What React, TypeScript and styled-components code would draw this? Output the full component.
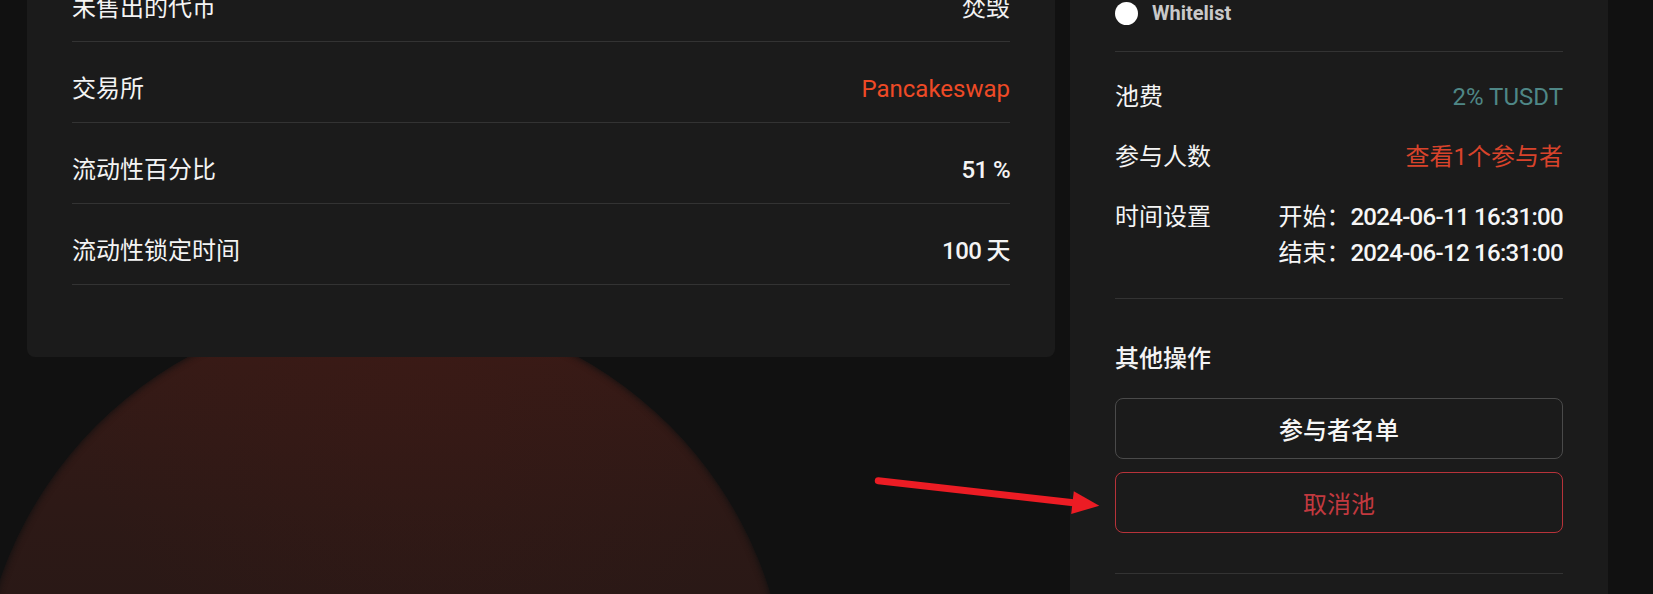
import React from "react";
import styled, { createGlobalStyle } from "styled-components";

const GlobalStyle = createGlobalStyle`
  html, body {
    margin: 0;
    padding: 0;
    background: #111111;
  }
  body {
    font-family: Roboto, "Noto Sans CJK SC", sans-serif;
    color: #f2f2f2;
    overflow: hidden;
  }
  * { box-sizing: border-box; }
`;

const Page = styled.div`
  position: relative;
  width: 1653px;
  height: 594px;
  overflow: hidden;
  background: #111111;
`;

const Glow = styled.div`
  position: absolute;
  z-index: 0;
  left: -22px;
  top: 307px;
  width: 810px;
  height: 810px;
  border-radius: 50%;
  background:
    radial-gradient(circle at 55% 8%, rgba(70, 26, 21, 0.25) 0%, rgba(70, 26, 21, 0) 40%),
    linear-gradient(
      180deg,
      #3c1a16 0%,
      #351a16 8%,
      #2d1916 25%,
      #271816 45%,
      #211614 70%,
      #1c1513 100%
    );
  box-shadow: 0 0 6px 1px rgba(17, 17, 17, 0.9) inset;
`;

const Layout = styled.div`
  position: relative;
  z-index: 1;
  display: flex;
  align-items: flex-start;
  gap: 15px;
  padding-left: 27px;
`;

const Card = styled.section`
  width: 1028px;
  margin-top: -69px;
  padding: 30px 45px 72px;
  background: #1b1b1b;
  border-radius: 8px;
`;

const InfoRow = styled.div`
  display: flex;
  align-items: center;
  justify-content: space-between;
  padding: 29px 0 15px;
  font-size: 24px;
  line-height: 36px;
  border-bottom: 1px solid #333333;
`;

const Label = styled.span`
  color: #f4f4f4;
  font-weight: 400;
`;

type Tone = "plain" | "strong" | "orange" | "teal" | "red";

const toneColor: Record<Tone, string> = {
  plain: "#f2f2f2",
  strong: "#f4f4f4",
  orange: "#ee4a26",
  teal: "#4f8786",
  red: "#d8432b",
};

const Value = styled.span<{ $tone: Tone }>`
  color: ${(p) => toneColor[p.$tone]};
  font-weight: ${(p) => (p.$tone === "strong" ? 500 : 400)};
  letter-spacing: ${(p) => (p.$tone === "strong" ? "-0.6px" : "0")};
`;

const Panel = styled.aside`
  width: 538px;
  min-height: 720px;
  margin-top: -40px;
  padding: 41px 45px 0;
  background: #1b1b1b;
`;

const Section = styled.div<{ $pad: string }>`
  padding: ${(p) => p.$pad};
  border-bottom: 1px solid #333333;
`;

const WhitelistRow = styled.div`
  display: flex;
  align-items: center;
  gap: 14px;
  height: 24px;
`;

const Dot = styled.span`
  width: 23px;
  height: 23px;
  border-radius: 50%;
  background: #ffffff;
  flex: none;
`;

const WhitelistText = styled.span`
  font-size: 20px;
  font-weight: 700;
  color: #c9c9c9;
  line-height: 24px;
`;

const FeeList = styled.div`
  display: flex;
  flex-direction: column;
  gap: 24px;
`;

const FeeRow = styled.div`
  display: flex;
  align-items: flex-start;
  justify-content: space-between;
  font-size: 24px;
  line-height: 36px;
`;

const TimeBlock = styled.div`
  display: flex;
  flex-direction: column;
`;

const TimeLine = styled.div`
  display: flex;
  color: #f6f6f6;
`;

const TimePrefix = styled.span`
  width: 72px;
  flex: none;
`;

const Stamp = styled.span`
  font-weight: 500;
  letter-spacing: -0.7px;
`;

const OpsTitle = styled.div`
  font-size: 24px;
  line-height: 36px;
  font-weight: 500;
  color: #f4f4f4;
`;

const ButtonStack = styled.div`
  display: flex;
  flex-direction: column;
  gap: 13px;
  margin-top: 21px;
`;

const ActionButton = styled.button<{ $danger?: boolean }>`
  height: 61px;
  width: 100%;
  display: flex;
  align-items: center;
  justify-content: center;
  background: transparent;
  border: 1px solid ${(p) => (p.$danger ? "#b7333a" : "#4a4a4a")};
  border-radius: 8px;
  color: ${(p) => (p.$danger ? "#c2393f" : "#f6f6f6")};
  font-family: Roboto, "Noto Sans CJK SC", sans-serif;
  font-size: 24px;
  font-weight: ${(p) => (p.$danger ? 400 : 500)};
  cursor: pointer;
`;

const ArrowOverlay = styled.svg`
  position: absolute;
  z-index: 3;
  left: 868px;
  top: 470px;
  width: 240px;
  height: 50px;
  overflow: visible;
`;

const rows: { label: string; value: string; tone: Tone }[] = [
  { label: "未售出的代币", value: "焚毁", tone: "plain" },
  { label: "交易所", value: "Pancakeswap", tone: "orange" },
  { label: "流动性百分比", value: "51 %", tone: "strong" },
  { label: "流动性锁定时间", value: "100 天", tone: "strong" },
];

export default function App() {
  return (
    <Page>
      <GlobalStyle />
      <Glow />
      <Layout>
        <Card>
          {rows.map((r) => (
            <InfoRow key={r.label}>
              <Label>{r.label}</Label>
              <Value $tone={r.tone}>{r.value}</Value>
            </InfoRow>
          ))}
        </Card>
        <Panel>
          <Section $pad="0 0 26px">
            <WhitelistRow>
              <Dot />
              <WhitelistText>Whitelist</WhitelistText>
            </WhitelistRow>
          </Section>
          <Section $pad="27px 0">
            <FeeList>
              <FeeRow>
                <Label>池费</Label>
                <Value $tone="teal">2% TUSDT</Value>
              </FeeRow>
              <FeeRow>
                <Label>参与人数</Label>
                <Value $tone="red">查看1个参与者</Value>
              </FeeRow>
              <FeeRow>
                <Label>时间设置</Label>
                <TimeBlock>
                  <TimeLine>
                    <TimePrefix>开始：</TimePrefix>
                    <Stamp>2024-06-11 16:31:00</Stamp>
                  </TimeLine>
                  <TimeLine>
                    <TimePrefix>结束：</TimePrefix>
                    <Stamp>2024-06-12 16:31:00</Stamp>
                  </TimeLine>
                </TimeBlock>
              </FeeRow>
            </FeeList>
          </Section>
          <Section $pad="42px 0 40px">
            <OpsTitle>其他操作</OpsTitle>
            <ButtonStack>
              <ActionButton>参与者名单</ActionButton>
              <ActionButton $danger>取消池</ActionButton>
            </ButtonStack>
          </Section>
        </Panel>
      </Layout>
      <ArrowOverlay viewBox="0 0 240 50">
        <line
          x1="10.3"
          y1="10.7"
          x2="212"
          y2="33.5"
          stroke="#ec1c24"
          strokeWidth="7"
          strokeLinecap="round"
        />
        <polygon points="231.3,35.7 205.8,21.3 203.2,44.1" fill="#ec1c24" />
      </ArrowOverlay>
    </Page>
  );
}
